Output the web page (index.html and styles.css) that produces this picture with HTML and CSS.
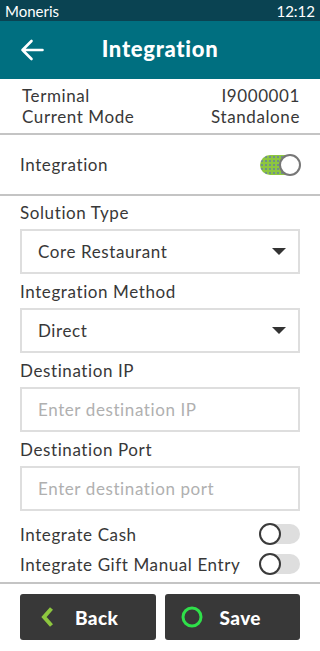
FILE: index.html
```html
<!DOCTYPE html>
<html lang="en">
<head>
  <meta charset="UTF-8">
  <meta name="viewport" content="width=device-width, initial-scale=1.0">
  <title>Integration</title>
  <link rel="stylesheet" href="styles.css">
</head>
<body>
  <div class="statusbar">
    <span>Moneris</span>
    <span>12:12</span>
  </div>
  <header class="topbar">
    <button class="back-arrow" aria-label="Back">
      <svg width="24" height="22" viewBox="0 0 24 22">
        <path d="M22.5 11H2.5M11.5 2L2.5 11L11.5 20" fill="none" stroke="#fff" stroke-width="2.6" stroke-linecap="round" stroke-linejoin="round"/>
      </svg>
    </button>
    <h1>Integration</h1>
    <span></span>
  </header>

  <div class="info">
    <div class="info-row"><span>Terminal</span><span>I9000001</span></div>
    <div class="info-row"><span>Current Mode</span><span>Standalone</span></div>
  </div>

  <div class="switch-row main-switch">
    <span>Integration</span>
    <span class="toggle on"><span class="knob"></span></span>
  </div>

  <div class="form">
    <div class="field">
      <label>Solution Type</label>
      <div class="select"><span>Core Restaurant</span><span class="caret"></span></div>
    </div>
    <div class="field">
      <label>Integration Method</label>
      <div class="select"><span>Direct</span><span class="caret"></span></div>
    </div>
    <div class="field">
      <label>Destination IP</label>
      <input type="text" placeholder="Enter destination IP">
    </div>
    <div class="field">
      <label>Destination Port</label>
      <input type="text" placeholder="Enter destination port">
    </div>

    <div class="options">
      <div class="switch-row small">
        <span>Integrate Cash</span>
        <span class="toggle"><span class="knob"></span></span>
      </div>
      <div class="switch-row small">
        <span>Integrate Gift Manual Entry</span>
        <span class="toggle"><span class="knob"></span></span>
      </div>
    </div>
  </div>

  <div class="actions">
    <button class="btn">
      <span class="btn-icon">
        <svg width="14" height="22" viewBox="0 0 14 22">
          <path d="M11.5 2.5L4 11L11.5 19.5" fill="none" stroke="#8dc63f" stroke-width="4" stroke-linejoin="miter"/>
        </svg>
      </span>
      <span>Back</span>
    </button>
    <button class="btn">
      <span class="btn-icon">
        <svg width="22" height="22" viewBox="0 0 22 22">
          <circle cx="11" cy="11" r="9" fill="none" stroke="#2fe04a" stroke-width="3"/>
        </svg>
      </span>
      <span>Save</span>
    </button>
  </div>
</body>
</html>
```

FILE: styles.css
```css
body {
  margin: 0;
  font-family: Lato, "Noto Sans", sans-serif;
  color: #383838;
  background: #fff;
}
.statusbar {
  height: 21px;
  background: #0a4352;
  color: #fff;
  display: flex;
  justify-content: space-between;
  align-items: center;
  padding: 0 5px;
  font-size: 15px;
}
.topbar {
  height: 58px;
  background: #006f80;
  display: grid;
  grid-template-columns: 1fr auto 1fr;
  align-items: center;
}
.back-arrow {
  background: none;
  border: none;
  padding: 0 0 0 20px;
  display: flex;
  justify-content: flex-start;
}
.topbar h1 {
  margin: 0 0 3px;
  color: #fff;
  font-size: 22px;
  font-weight: 900;
  letter-spacing: 0.7px;
}
.info {
  padding: 6px 20px 6px 22px;
  border-bottom: 2px solid #c4c4c4;
  font-size: 17px;
  letter-spacing: 0.6px;
}
.info-row {
  display: flex;
  justify-content: space-between;
  line-height: 21px;
}
.switch-row {
  display: flex;
  justify-content: space-between;
  align-items: center;
  font-size: 17px;
  letter-spacing: 0.6px;
}
.main-switch {
  height: 59px;
  padding: 0 20px;
  border-bottom: 2px solid #c4c4c4;
}
.toggle {
  width: 40px;
  height: 20px;
  border-radius: 10px;
  background: #dedede;
  position: relative;
}
.toggle .knob {
  position: absolute;
  left: -1px;
  top: -1px;
  width: 18px;
  height: 18px;
  border-radius: 50%;
  background: #fff;
  border: 2px solid #3a3a3a;
}
.toggle.on {
  background-color: #8dc63f;
  background-image: radial-gradient(circle, #6f8f8a 0.7px, transparent 1.1px);
  background-size: 4px 4px;
}
.toggle.on .knob {
  left: auto;
  right: -1px;
  border-color: #777;
}
.form {
  padding: 7px 20px 0;
  border-bottom: 2px solid #c4c4c4;
}
.field {
  margin-bottom: 8px;
}
.field label {
  display: block;
  font-size: 17px;
  line-height: 20px;
  margin-bottom: 6px;
  letter-spacing: 0.6px;
}
.select, .field input {
  box-sizing: border-box;
  width: 100%;
  height: 45px;
  border: 2px solid #dedede;
  background: #fff;
  font-family: inherit;
  font-size: 17px;
  letter-spacing: 0.6px;
  color: #383838;
}
.select {
  display: flex;
  justify-content: space-between;
  align-items: center;
  padding: 0 12px 0 16px;
}
.caret {
  width: 0;
  height: 0;
  border-left: 7px solid transparent;
  border-right: 7px solid transparent;
  border-top: 7px solid #333;
}
.field input {
  padding: 0 16px;
  outline: none;
}
.field input::placeholder {
  color: #b0b0b0;
}
.options {
  padding: 0 0 3px;
}
.switch-row.small {
  height: 30px;
}
.actions {
  display: flex;
  gap: 9px;
  padding: 10px 20px;
}
.btn {
  flex: 1;
  height: 46px;
  background: #383838;
  border: none;
  border-radius: 3px;
  color: #fff;
  font-family: inherit;
  font-size: 19px;
  font-weight: 900;
  letter-spacing: 0.4px;
  display: flex;
  align-items: center;
  gap: 17px;
  padding: 0 0 0 16px;
}
.btn-icon {
  width: 22px;
  display: flex;
  justify-content: center;
}
```
